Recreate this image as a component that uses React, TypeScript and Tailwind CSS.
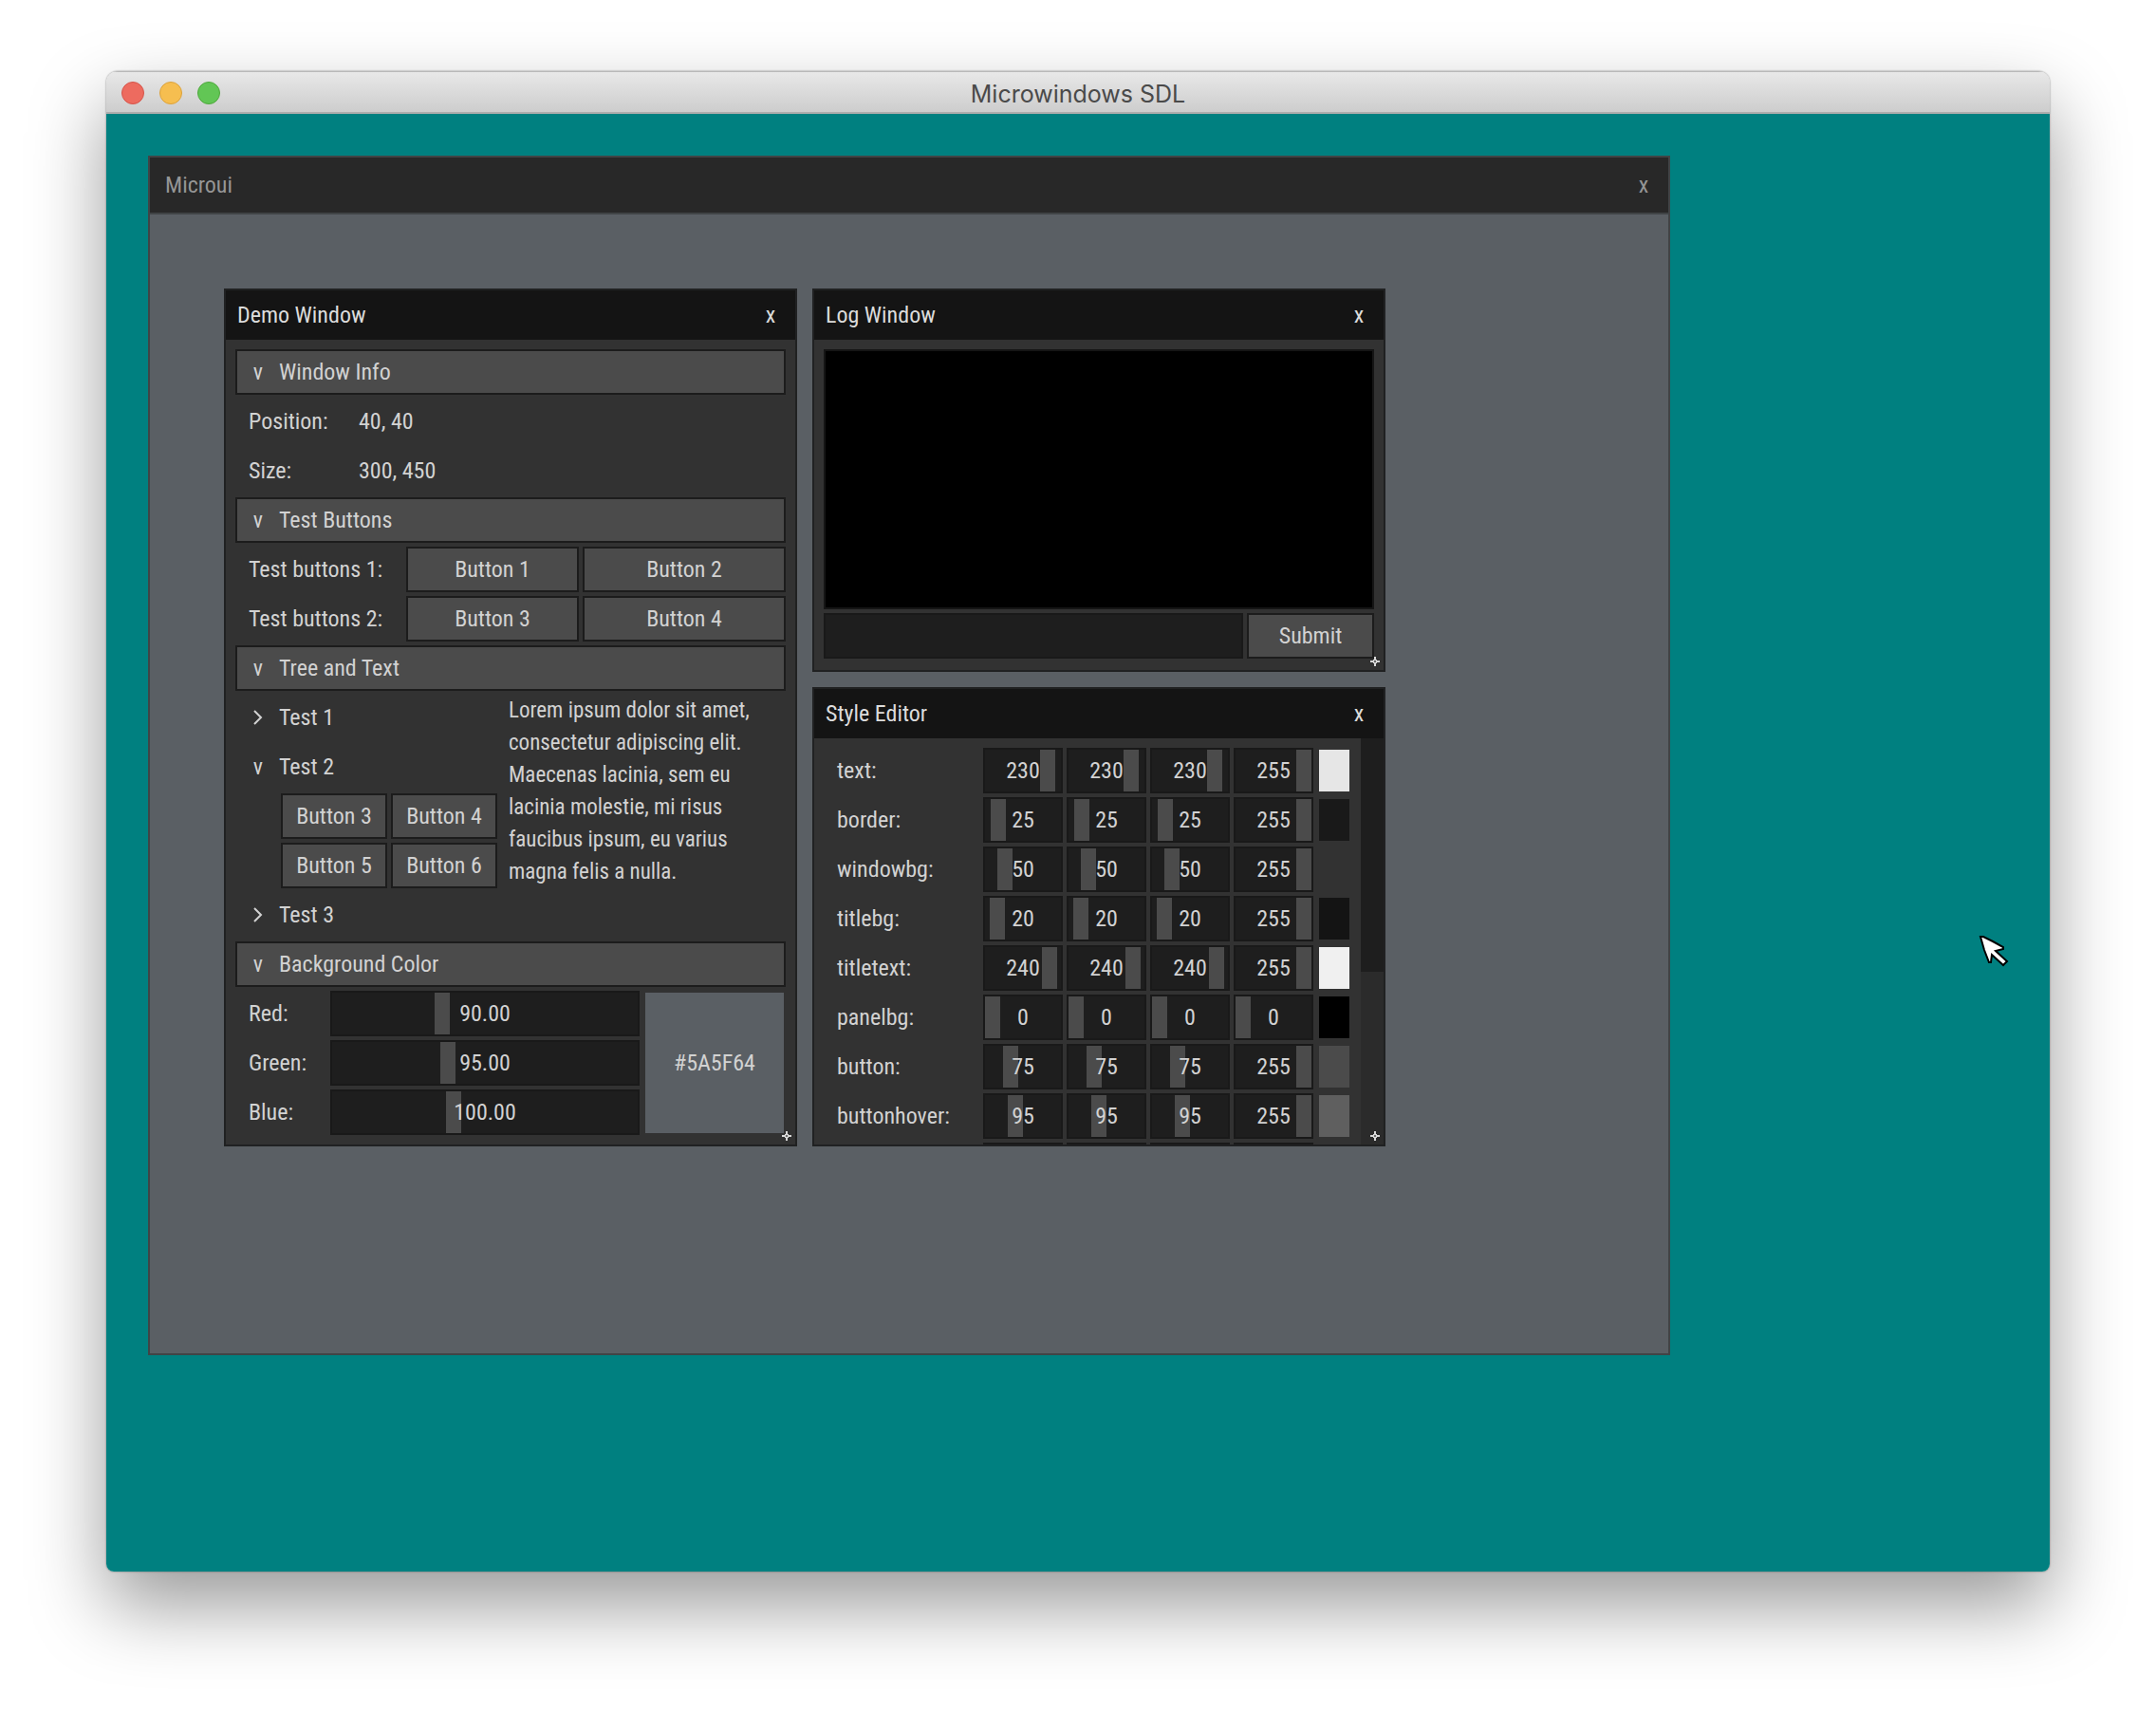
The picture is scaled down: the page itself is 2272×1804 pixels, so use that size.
import type { ReactNode } from "react";

const face = "font-['Roboto_Condensed','Liberation_Sans',sans-serif]";

function ResizeGrip() {
  return (
    <svg viewBox="0 0 10 10" className="absolute right-1 bottom-1 size-2.5 text-[#d8d8d8]" fill="currentColor" aria-hidden="true">
      <path d="M4 0h2v3h1v1h3v2H7v1H6v3H4V7H3V6H0V4h3V3h1z" />
      <rect x="4" y="4" width="2" height="2" fill="#6a6a6a" />
    </svg>
  );
}

function TitleBar({ title }: { title: string }) {
  return (
    <header className="flex h-[52px] shrink-0 items-center justify-between bg-[#141414] pl-3 text-[#dcdcdc]">
      <h2>{title}</h2>
      <button type="button" aria-label={"Close " + title} className="h-full w-[52px]">x</button>
    </header>
  );
}

function Pane({ title, className, children }: { title: string; className: string; children: ReactNode }) {
  return (
    <section className={"relative flex flex-col border-2 border-[#202122] bg-[#323232] " + className}>
      <TitleBar title={title} />
      {children}
      <ResizeGrip />
    </section>
  );
}

function Header({ label }: { label: string }) {
  return (
    <button type="button" aria-expanded="true" className="flex h-12 w-full items-center border-2 border-[#1c1c1c] bg-[#4b4b4b]">
      <span className="w-11 text-center">v</span>
      <span>{label}</span>
    </button>
  );
}

function TreeItem({ label, open = false }: { label: string; open?: boolean }) {
  return (
    <button type="button" aria-expanded={open} className="flex h-12 w-full items-center border-x-2 border-transparent">
      <span className="flex w-11 justify-center">
        {open ? (
          "v"
        ) : (
          <svg viewBox="0 0 10 18" className="h-[18px] w-2.5" fill="none" stroke="currentColor" strokeWidth="2" aria-hidden="true">
            <path d="M1 2l7 7-7 7" />
          </svg>
        )}
      </span>
      <span>{label}</span>
    </button>
  );
}

function Btn({ children, className = "" }: { children: ReactNode; className?: string }) {
  return (
    <button type="button" className={"h-12 border-2 border-[#1c1c1c] bg-[#4b4b4b] text-center " + className}>
      {children}
    </button>
  );
}

function Slider({ label, value, text, id }: { label: string; value: number; text: string; id?: string }) {
  return (
    <div className="relative h-12 min-w-0 border-2 border-[#191919] bg-[#1e1e1e]">
      <input
        id={id}
        type="range"
        min={0}
        max={255}
        defaultValue={value}
        aria-label={id ? undefined : label}
        className="block h-full w-full appearance-none bg-transparent [&::-webkit-slider-thumb]:h-11 [&::-webkit-slider-thumb]:w-4 [&::-webkit-slider-thumb]:appearance-none [&::-webkit-slider-thumb]:rounded-none [&::-webkit-slider-thumb]:bg-[#4b4b4b]"
      />
      <span className="pointer-events-none absolute inset-0 flex items-center justify-center">{text}</span>
    </div>
  );
}

const channels = [
  { name: "Red:", value: 90 },
  { name: "Green:", value: 95 },
  { name: "Blue:", value: 100 },
];

function DemoWindow() {
  return (
    <Pane title="Demo Window" className="row-span-2">
      <div className="flex flex-col gap-1 p-2.5">
        <Header label="Window Info" />
        <dl className="grid grid-cols-[112px_1fr] gap-x-1 gap-y-1 pl-3.5 leading-[48px]">
          <dt>Position:</dt>
          <dd>40, 40</dd>
          <dt>Size:</dt>
          <dd>300, 450</dd>
        </dl>
        <Header label="Test Buttons" />
        <div className="grid grid-cols-[176px_182px_1fr] items-center gap-1 whitespace-nowrap">
          <span className="pl-3.5">Test buttons 1:</span>
          <Btn>Button 1</Btn>
          <Btn>Button 2</Btn>
          <span className="pl-3.5">Test buttons 2:</span>
          <Btn>Button 3</Btn>
          <Btn>Button 4</Btn>
        </div>
        <Header label="Tree and Text" />
        <div className="grid grid-cols-[276px_1fr] gap-1">
          <div className="flex flex-col gap-1">
            <TreeItem label="Test 1" />
            <TreeItem label="Test 2" open />
            <div className="grid grid-cols-2 gap-1 pl-12">
              <Btn>Button 3</Btn>
              <Btn>Button 4</Btn>
              <Btn>Button 5</Btn>
              <Btn>Button 6</Btn>
            </div>
            <TreeItem label="Test 3" />
          </div>
          <p className="pl-2 text-[23px] leading-[34px] whitespace-nowrap">
            Lorem ipsum dolor sit amet,
            <br />
            consectetur adipiscing elit.
            <br />
            Maecenas lacinia, sem eu
            <br />
            lacinia molestie, mi risus
            <br />
            faucibus ipsum, eu varius
            <br />
            magna felis a nulla.
          </p>
        </div>
        <Header label="Background Color" />
        <div className="grid grid-cols-[1fr_150px] gap-1">
          <div className="flex flex-col gap-1">
            {channels.map((c) => (
              <div key={c.name} className="grid grid-cols-[96px_1fr] items-center gap-1">
                <label htmlFor={"bg-" + c.name} className="pl-3.5">
                  {c.name}
                </label>
                <Slider id={"bg-" + c.name} label={c.name} value={c.value} text={c.value.toFixed(2)} />
              </div>
            ))}
          </div>
          <div className="m-0.5 flex items-center justify-center bg-[#5a5f64]">#5A5F64</div>
        </div>
      </div>
    </Pane>
  );
}

function LogWindow() {
  return (
    <Pane title="Log Window" className="">
      <div className="flex flex-1 flex-col gap-1 px-2.5 pt-2.5 pb-3">
        <div role="log" aria-label="Log output" className="h-[274px] border-2 border-[#151515] bg-black" />
        <form className="grid grid-cols-[1fr_134px] gap-1" onSubmit={(e) => e.preventDefault()}>
          <input type="text" aria-label="Log message" className="h-12 min-w-0 border-2 border-[#191919] bg-[#1e1e1e] px-3 outline-none" />
          <Btn>Submit</Btn>
        </form>
      </div>
    </Pane>
  );
}

const styles = [
  { name: "text:", value: 230, alpha: 255, swatch: "bg-[#e6e6e6]" },
  { name: "border:", value: 25, alpha: 255, swatch: "bg-[#191919]" },
  { name: "windowbg:", value: 50, alpha: 255, swatch: "bg-[#323232]" },
  { name: "titlebg:", value: 20, alpha: 255, swatch: "bg-[#141414]" },
  { name: "titletext:", value: 240, alpha: 255, swatch: "bg-[#f0f0f0]" },
  { name: "panelbg:", value: 0, alpha: 0, swatch: "bg-black" },
  { name: "button:", value: 75, alpha: 255, swatch: "bg-[#4b4b4b]" },
  { name: "buttonhover:", value: 95, alpha: 255, swatch: "bg-[#5f5f5f]" },
];

function StyleEditor() {
  return (
    <Pane title="Style Editor" className="">
      <div className="flex h-[428px] overflow-hidden">
        <div className="flex flex-1 flex-col gap-1 p-2.5">
          {styles.map((s) => (
            <div key={s.name} className="grid grid-cols-[1fr_84px_84px_84px_84px_36px] items-center gap-1">
              <span className="pl-3.5">{s.name}</span>
              <Slider label={s.name + " red"} value={s.value} text={String(s.value)} />
              <Slider label={s.name + " green"} value={s.value} text={String(s.value)} />
              <Slider label={s.name + " blue"} value={s.value} text={String(s.value)} />
              <Slider label={s.name + " alpha"} value={s.alpha} text={String(s.alpha)} />
              <span className={"m-0.5 h-11 " + s.swatch} />
            </div>
          ))}
          <div className="grid h-12 shrink-0 grid-cols-[1fr_84px_84px_84px_84px_36px] gap-1" aria-hidden="true">
            <span />
            <span className="bg-[#191919]" />
            <span className="bg-[#191919]" />
            <span className="bg-[#191919]" />
            <span className="bg-[#191919]" />
          </div>
        </div>
        <div className="w-6 bg-[#2b2b2b]">
          <div className="h-[246px] bg-[#1e1e1e]" />
        </div>
      </div>
    </Pane>
  );
}

function MousePointer() {
  return (
    <svg viewBox="0 0 34 34" className="absolute right-[42px] top-[865px] size-[34px]" aria-hidden="true">
      <path
        d="M3 2h3l10 5 11 6v2l-8 2 12 11-4 4-12-11-1 8h-2L7 16z"
        fill="#fff"
        stroke="#000"
        strokeWidth="2"
      />
    </svg>
  );
}

export default function App() {
  return (
    <div className="bg-white px-28 pt-[75px] pb-[148px]">
      <main className="overflow-hidden rounded-t-xl rounded-b-lg shadow-[0_0_2px_rgba(0,0,0,0.5),0_36px_80px_rgba(0,0,0,0.4)]">
        <header className="grid h-[45px] grid-cols-[1fr_auto_1fr] items-center border-t border-b-2 border-t-[#b8b8b8] border-b-[#adadad] bg-linear-to-b from-[#e8e8e8] to-[#cdcdcd] pt-0.5">
          <div className="flex gap-4 pl-4">
            <button type="button" aria-label="Close" className="size-6 rounded-full border border-[#d5544a] bg-[#ed6b5f]" />
            <button type="button" aria-label="Minimize" className="size-6 rounded-full border border-[#dba23c] bg-[#f6be50]" />
            <button type="button" aria-label="Zoom" className="size-6 rounded-full border border-[#4fa83d] bg-[#62c655]" />
          </div>
          <h1 className="pt-0.5 font-['Inter',sans-serif] text-[25px] leading-8 text-[#4a4a4a]">Microwindows SDL</h1>
        </header>
        <div className={"relative h-[1536px] bg-[#008080] pt-11 pr-[400px] pl-11 text-[24px] leading-[34px] text-[#d2d2d2] " + face}>
          <section className="h-[1264px] border-2 border-[#404446] bg-[#5a5f64]">
            <header className="flex h-[60px] items-center justify-between border-b-2 border-[#404446] bg-[#282828] pl-4 text-[#969696]">
              <h2>Microui</h2>
              <button type="button" aria-label="Close Microui" className="h-full w-[52px]">x</button>
            </header>
            <div className="grid grid-cols-[604px_604px] grid-rows-[auto_1fr] gap-4 pt-[78px] pl-[78px]">
              <DemoWindow />
              <LogWindow />
              <StyleEditor />
            </div>
          </section>
          <MousePointer />
        </div>
      </main>
    </div>
  );
}
